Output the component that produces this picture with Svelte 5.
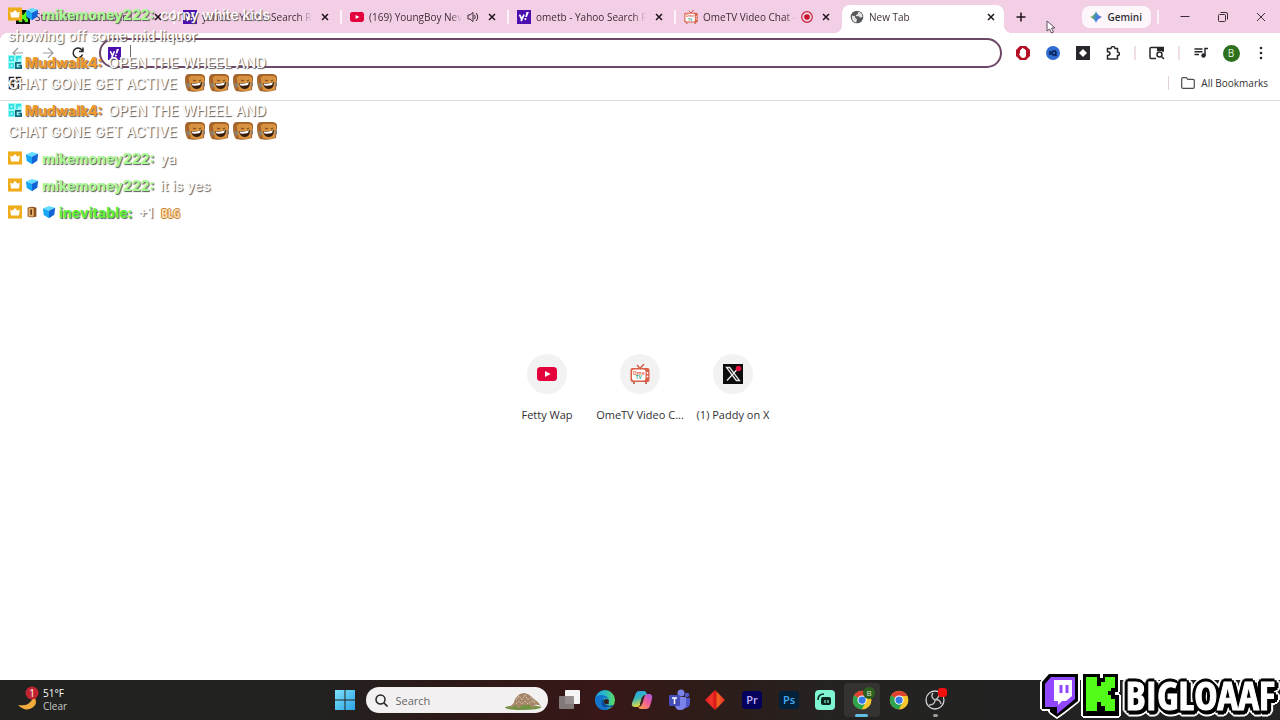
<script lang="ts">
  type Tab = { title: string; icon: string; media?: string; active?: boolean };

  const tabs: Tab[] = [
    { title: "Streamer Dashboard", icon: "kick" },
    { title: "yahoo - Yahoo Search R", icon: "yahoo" },
    { title: "(169) YoungBoy Nev", icon: "youtube", media: "audio" },
    { title: "ometb - Yahoo Search R", icon: "yahoo" },
    { title: "OmeTV Video Chat -", icon: "ome", media: "record" },
    { title: "New Tab", icon: "globe", active: true },
  ];

  const shortcuts = [
    { label: "Fetty Wap", icon: "youtube" },
    { label: "OmeTV Video C...", icon: "ome" },
    { label: "(1) Paddy on X", icon: "x" },
  ];

  const wheel = "OPEN THE WHEEL AND CHAT GONE GET ACTIVE";
  const messages = [
    { user: "mikemoney222", tone: "lime", badges: ["crown", "cube"], text: "corny white kids showing off some mid liquor", emotes: [] },
    { user: "Mudwalk4", tone: "orange", badges: ["og"], text: wheel, emotes: ["toast", "toast", "toast", "toast"] },
    { user: "Mudwalk4", tone: "orange", badges: ["og"], text: wheel, emotes: ["toast", "toast", "toast", "toast"] },
    { user: "mikemoney222", tone: "lime", badges: ["crown", "cube"], text: "ya", emotes: [] },
    { user: "mikemoney222", tone: "lime", badges: ["crown", "cube"], text: "it is yes", emotes: [] },
    { user: "inevitable", tone: "green", badges: ["crown", "bread", "cube"], text: "+1", emotes: ["blg"] },
  ];

  const apps = [
    { id: "taskview", label: "Task view" },
    { id: "edge", label: "Microsoft Edge" },
    { id: "copilot", label: "Copilot" },
    { id: "teams", label: "Teams" },
    { id: "diamond", label: "Diamond" },
    { id: "pr", label: "Premiere Pro" },
    { id: "ps", label: "Photoshop" },
    { id: "streamlabs", label: "Streamlabs" },
    { id: "chromeb", label: "Chrome, profile B" },
    { id: "chrome", label: "Chrome" },
    { id: "obs", label: "OBS Studio" },
  ];

  let address = $state("");
  let query = $state("");
</script>

{#snippet siteIcon(name: string, size: number)}
  <svg class="site-icon" width={size} height={size} viewBox="0 0 20 20" aria-hidden="true">
    {#if name === "youtube"}
      <rect y="3" width="20" height="14" rx="3.5" fill="#e4003a" />
      <path d="M8 7l5.5 3L8 13z" fill="#fff" />
    {:else if name === "yahoo"}
      <rect width="20" height="20" fill="#4b0fae" />
      <path d="M3.5 6.5l3 6M10 6.5l-4.2 9.5" stroke="#fff" stroke-width="2.4" fill="none" />
      <path d="M13.5 3H17l-2.800 7h-2.400z" fill="#fff" />
      <circle cx="12" cy="13" r="1.5" fill="#fff" />
    {:else if name === "ome"}
      <path d="M7 1l3 3.5L14 0" stroke="#d4573c" stroke-width="1.4" fill="none" />
      <rect x="0.500" y="4" width="19" height="14" rx="2" fill="#d95f47" />
      <rect x="2" y="5.5" width="13.500" height="11" rx="2" fill="#fff" />
      <path d="M4 18v2M16 18v2" stroke="#b9442e" stroke-width="1.5" />
      <circle cx="17.500" cy="9" r="0.9" fill="#fff" /><circle cx="17.500" cy="12.5" r="0.9" fill="#fff" />
      <text x="8.700" y="10.600" text-anchor="middle" font-size="5" font-weight="700" fill="#e2694f">Ome</text>
      <text x="8.700" y="15.200" text-anchor="middle" font-size="5" font-weight="700" fill="#35a889">TV</text>
    {:else if name === "globe"}
      <circle cx="10" cy="10" r="9" fill="#55585b" />
      <path d="M3 8l4 1 1 3 2 1-1 5c-4 0-7-4-6-10zM9 2l3 1-1 3-3 1 1 2h4l1 2 4-1c0-5-4-8-9-8z" fill="#f4f4f4" opacity="0.9" />
    {:else if name === "x"}
      <rect width="20" height="20" fill="#0c0c0c" />
      <path d="M3.5 3.5h3.200l9.800 13h-3.200zM15.5 4L4 16.5" fill="none" stroke="#e8e8e8" stroke-width="1.3" />
      <circle cx="15.5" cy="4.5" r="2.800" fill="#e3123f" />
    {:else if name === "kick"}
      <rect width="20" height="20" fill="#0a0a0a" />
      <path d="M4 3h5v4h2V5h2V3h4v5h-2v4h2v5h-4v-2h-2v-2H9v4H4z" fill="#53fc18" />
    {/if}
  </svg>
{/snippet}

{#snippet chatIcon(name: string)}
  {#if name === "crown"}
    <svg class="badge" viewBox="0 0 16 16" aria-hidden="true">
      <rect width="16" height="15" y="0.5" fill="#efad1c" />
      <path d="M2.500 5L5 6.500l3-3 3 3L13.500 5l-1 7h-9z" fill="#fff" />
    </svg>
  {:else if name === "cube"}
    <svg class="badge" viewBox="0 0 16 16" aria-hidden="true">
      <path d="M1 4l7-3 7 2-7 3.5z" fill="#5fdcff" />
      <path d="M1 4l7 2.500V15l-6-3.500z" fill="#18a6f5" />
      <path d="M15 3L8 6.500V15l6-4z" fill="#1263d6" />
    </svg>
  {:else if name === "og"}
    <svg class="badge" viewBox="0 0 16 16" aria-hidden="true">
      <rect width="16" height="16" fill="#a5fbf5" />
      <path d="M1 1h6v6H1zM9 1h6v3h-4v3H9zM1 9h6v6H1z" fill="#32dfe2" />
      <path d="M3 3h2v2H3zM3 11h2v2H3z" fill="#d5ffff" />
      <path d="M15 9H9v6h6v-3h-3" fill="none" stroke="#14677d" stroke-width="2" />
    </svg>
  {:else if name === "bread"}
    <svg class="badge" viewBox="0 0 16 16" aria-hidden="true">
      <path d="M3 3q5-2 10 0v10q-5 2-10 0z" fill="#895024" />
      <path d="M4 4q3-2 6 0v9H4z" fill="#e7b06a" />
      <path d="M7 5v6" stroke="#633813" stroke-width="2" />
    </svg>
  {:else if name === "toast"}
    <svg class="emote" viewBox="0 0 20 20" aria-hidden="true">
      <path d="M0 6Q0 1 4 1h12q5 1 4 5l-1 11q-8 3-16 1-3-4-3-12z" fill="#a5652b" />
      <path d="M4 7Q3 3 7 3h9q4 1 3 4l-1 10q-6 2-12 0z" fill="#d8923f" />
      <path d="M8 7l3 1M14 8l2-1" stroke="#7b431a" stroke-width="1.2" />
      <path d="M6 10q5 1 11-1 0 7-5 7-5 0-6-6z" fill="#351b10" />
      <path d="M6.500 10.500q5 .500 9.500-1l-1 2.500q-4 1-7.500.500z" fill="#fff" />
      <path d="M1 10l4 1v4l-3-2zM18 10l2-1v4l-2 1z" fill="#8b8478" />
    </svg>
  {:else}
    <span class="blg">BLG</span>
  {/if}
{/snippet}

{#snippet chrome()}
  <circle cx="12" cy="12" r="11" fill="#f6c62d" />
  <path d="M12 12L2.500 6.500A11 11 0 0 1 21.500 6.500z" fill="#df4132" />
  <path d="M12 12L2.500 6.500A11 11 0 0 0 12 23l4.500-8z" fill="#2da44e" />
  <path d="M12 7h9.800A11 11 0 0 1 12 23l4.500-8.500z" fill="#f6c62d" />
  <circle cx="12" cy="12" r="5.500" fill="#fff" />
  <circle cx="12" cy="12" r="4.300" fill="#3377e8" />
{/snippet}

<div class="desktop">
  <header class="tab-strip">
    <div class="tabs" role="tablist" aria-label="Open tabs">
      {#each tabs as tab}
        <div class="tab" class:active={tab.active}>
          <button class="tab-main" type="button" role="tab" aria-selected={!!tab.active}>
            {@render siteIcon(tab.icon, 14)}
            <span class="tab-title">{tab.title}</span>
            {#if tab.media === "audio"}
              <svg class="media" viewBox="0 0 12 12" aria-label="Playing audio">
                <path d="M1 4h2l3-2.500v9L3 8H1z" fill="none" stroke="#3b2a36" />
                <path d="M7.500 4q1.500 2 0 4M9 2q3.500 4 0 8" fill="none" stroke="#3b2a36" />
              </svg>
            {:else if tab.media === "record"}
              <svg class="media" viewBox="0 0 12 12" aria-label="Recording">
                <circle cx="6" cy="6" r="5.300" fill="none" stroke="#c5273c" stroke-width="1.2" />
                <circle cx="6" cy="6" r="2.800" fill="#c5162e" />
              </svg>
            {/if}
          </button>
          <button class="tab-close" type="button" aria-label="Close {tab.title}">
            <svg width="8" height="8" viewBox="0 0 8 8"><path d="M1 1l6 6M7 1L1 7" stroke="#20151d" stroke-width="1.5" /></svg>
          </button>
        </div>
      {/each}
      <button class="new-tab" type="button" aria-label="New tab">
        <svg width="10" height="10" viewBox="0 0 10 10"><path d="M5 0.500v9M0.500 5h9" stroke="#20151d" stroke-width="1.5" /></svg>
      </button>
    </div>
    <button class="gemini" type="button">
      <svg width="12" height="12" viewBox="0 0 12 12" aria-hidden="true">
        <path d="M6 0q1 4 6 6-5 2-6 6-1-4-6-6 5-2 6-6z" fill="url(#gem)" />
        <defs>
          <linearGradient id="gem" x1="0" y1="0.300" x2="1" y2="0.600">
            <stop offset="0" stop-color="#e5b53b" /><stop offset="0.350" stop-color="#4d9e8f" /><stop offset="0.600" stop-color="#3f80e6" /><stop offset="1" stop-color="#7b5fc4" />
          </linearGradient>
        </defs>
      </svg>
      Gemini
    </button>
    <div class="window-controls">
      <button type="button" aria-label="Minimize"><svg viewBox="0 0 10 10"><path d="M0.500 4.500h9" /></svg></button>
      <button type="button" aria-label="Restore"><svg viewBox="0 0 10 10"><rect x="0.500" y="2.500" width="7" height="7" rx="1" /><path d="M2.500 0.500H8q1.500 0 1.500 1.500v5.500" /></svg></button>
      <button type="button" aria-label="Close"><svg viewBox="0 0 10 10"><path d="M1 1l8 8M9 1L1 9" /></svg></button>
    </div>
  </header>

  <div class="chrome-body">
    <div class="toolbar">
      <button class="tool" type="button" aria-label="Back"><svg class="faint" viewBox="0 0 14 14"><path d="M12 7H2M7 2L2 7l5 5" /></svg></button>
      <button class="tool" type="button" aria-label="Forward"><svg class="faint" viewBox="0 0 14 14"><path d="M2 7h10M7 2l5 5-5 5" /></svg></button>
      <button class="tool" type="button" aria-label="Reload"><svg viewBox="0 0 14 14"><path d="M11.500 8.500A4.800 4.800 0 1 1 10.800 4L12 5.200M12 1.500v4H8" /></svg></button>
      <label class="omnibox">
        {@render siteIcon("yahoo", 13)}
        <span class="caret"></span>
        <input type="text" aria-label="Address and search bar" bind:value={address} />
      </label>
      <button class="tool" type="button" aria-label="AdBlock">
        <svg viewBox="0 0 14 14"><path class="solid" d="M4 0h6l4 4v6l-4 4H4l-4-4V4z" fill="#b40f24" /><path class="solid" d="M4 7V4h1V3h1V2h1.500v1H9v1h1v5q0 3-3 3-2 0-4-4z" fill="#fff" /></svg>
      </button>
      <button class="tool" type="button" aria-label="IQ">
        <svg viewBox="0 0 14 14"><circle class="solid" cx="7" cy="7" r="7" fill="#2f6bd0" /><path d="M4 5v4M9.500 9l1 1" stroke="#0b1c4c" /><circle cx="8" cy="7" r="2" stroke="#0b1c4c" /></svg>
      </button>
      <button class="tool" type="button" aria-label="Diamond">
        <svg viewBox="0 0 14 14"><rect class="solid" width="14" height="14" fill="#27272d" /><path class="solid" d="M7 3l4 4-4 4-4-4z" fill="#fff" /></svg>
      </button>
      <button class="tool" type="button" aria-label="Extensions">
        <svg viewBox="0 0 14 14"><path d="M1.500 2.500H5q.3-2 2-2t2 2h2.500v3.500q2 .3 2 1.800t-2 1.700v3.500h-10V9.500Q4 9.200 4 7.500T1.500 5.800z" /></svg>
      </button>
      <span class="divider"></span>
      <button class="tool" type="button" aria-label="Search tabs">
        <svg class="wide" viewBox="0 0 16 14"><path d="M7 12.500H2q-1 0-1-1v-9q0-1 1-1h12V6" /><path class="solid" d="M8 1h7v4H8z" fill="#26272a" /><circle cx="10.500" cy="8.500" r="2.500" /><path d="M12.500 10.500L15 13" /></svg>
      </button>
      <span class="divider"></span>
      <button class="tool" type="button" aria-label="Media controls">
        <svg viewBox="0 0 14 14"><path d="M0.500 3h8M0.500 5.800h8M0.500 8.500h4.500M11 9.500V2.500h3" /><circle class="solid" cx="9.500" cy="9.500" r="2.200" fill="#26272a" /></svg>
      </button>
      <button class="tool" type="button" aria-label="Profile"><span class="avatar">B</span></button>
      <button class="tool" type="button" aria-label="Menu">
        <svg viewBox="0 0 14 14"><g fill="#26272a"><circle class="solid" cx="7" cy="2" r="1.300" /><circle class="solid" cx="7" cy="7" r="1.300" /><circle class="solid" cx="7" cy="12" r="1.300" /></g></svg>
      </button>
    </div>

    <div class="bookmarks">
      <button class="tool" type="button" aria-label="Apps">
        <svg viewBox="0 0 14 14"><rect x="1.500" y="1.500" width="4" height="4" /><rect x="8.500" y="1.500" width="4" height="4" /><rect x="1.500" y="8.500" width="4" height="4" /><path d="M10.500 8v5M8 10.500h5" /></svg>
      </button>
      <button class="all-bookmarks" type="button">
        <svg width="14" height="12" viewBox="0 0 14 12"><path d="M0.700 10V2q0-1.300 1.300-1.300h3.300L6.800 2.300H12q1.300 0 1.300 1.300V10q0 1.300-1.300 1.300H2Q0.700 11.300 0.700 10z" fill="none" stroke="#4c4d50" stroke-width="1.2" /></svg>
        All Bookmarks
      </button>
    </div>
  </div>

  <main>
    <nav class="shortcuts" aria-label="Shortcuts">
      {#each shortcuts as shortcut}
        <a href="#{shortcut.icon}">
          <span class="bubble">{@render siteIcon(shortcut.icon, 20)}</span>
          <span>{shortcut.label}</span>
        </a>
      {/each}
    </nav>
  </main>

  <footer class="taskbar">
    <button class="weather" type="button">
      <svg width="24" height="28" viewBox="0 0 24 28" aria-hidden="true">
        <path d="M18 12q3 6-3 10-7 4-14-3 11 2 15-7z" fill="#f2ac3c" />
        <circle cx="15" cy="7" r="6.500" fill="#c32530" />
        <text x="15" y="10.500" text-anchor="middle" font-size="10" fill="#fff">1</text>
      </svg>
      <span><b>51°F</b><br />Clear</span>
    </button>

    <div class="dock">
      <button class="start" type="button" aria-label="Start">
        <svg width="20" height="20" viewBox="0 0 20 20"><path d="M0 0h9.500v9.500H0zM10.500 0H20v9.500h-9.500zM0 10.500h9.500V20H0zM10.500 10.500H20V20h-9.500z" fill="url(#win)" /><defs><linearGradient id="win" x2="1" y2="1"><stop stop-color="#7fe0fb" /><stop offset="1" stop-color="#2ba4e6" /></linearGradient></defs></svg>
      </button>
      <label class="search">
        <svg width="13" height="13" viewBox="0 0 13 13" aria-hidden="true"><circle cx="5.500" cy="5.500" r="4.500" fill="none" stroke="#262626" stroke-width="1.5" /><path d="M9 9l3.500 3.500" stroke="#262626" stroke-width="1.6" /></svg>
        <input type="text" placeholder="Search" aria-label="Search" bind:value={query} />
        <svg width="40" height="20" viewBox="0 0 40 20" aria-hidden="true">
          <path d="M1 17q20-5 37 0-3 3-20 3T1 17z" fill="#709343" />
          <path d="M2 18Q10 16 11 9q8-12 19 0 5 3 7 7-4-2-7-1l1 3h-3l-2-3h-8l-2 3h-3v-3q-6 3-11 3z" fill="#a68669" />
          <path d="M12 10l3-4 3 4 3-5 3 5 3-3 4 5M12 14l3-3 3 3 3-3 3 3 4-3 3 2" fill="none" stroke="#d3c3ae" stroke-dasharray="2 1" />
        </svg>
      </label>
      <div class="apps">
        {#each apps as app}
          <button type="button" class="app" class:running={app.id === "chromeb"} class:idle={app.id === "obs"} aria-label={app.label}>
            <svg width="24" height="24" viewBox="0 0 24 24">
              {#if app.id === "taskview"}
                <rect x="8" y="2" width="15" height="14" rx="1" fill="#f4f4f4" /><rect x="2" y="8" width="15" height="13" rx="1" fill="#8b8584" opacity="0.9" />
              {:else if app.id === "edge"}
                <circle cx="12" cy="12" r="10" fill="url(#edge-top)" />
                <path d="M2 12q0-5 7-5 6 1 7 5-1-2-4-2-4 1-3 5 2 5 8 5-2 2-5 2Q3 22 2 12z" fill="#1274cb" />
                <path d="M9 12q-3 9 10 7 1-1 1-2-6 2-9-2-1-2 0-4z" fill="#0d4b98" />
                <path d="M11 15q-1-4 2-4 3 0 3 2-1 2 0 3-3 1-5-1z" fill="#30201f" />
                <defs><linearGradient id="edge-top" x2="1"><stop stop-color="#1b9fe0" /><stop offset="0.500" stop-color="#2bb9c9" /><stop offset="1" stop-color="#5bdc60" /></linearGradient></defs>
              {:else if app.id === "copilot"}
                <path d="M6 5q1-2 3-2h5q2 0 2.500 2l.500 2h-2q-2 0-3 3l-2 7q-1 2-3 2H5q-4 0-3-4z" fill="url(#cop1)" />
                <path d="M18 6h1q4 0 3 5l-2 7q-1 3-4 3h-5q-2 0-3-2 3 0 4-3l2-6q1-4 4-4z" fill="url(#cop2)" />
                <path d="M12 9l-2 7h2l2-7z" fill="#382025" />
                <defs>
                  <linearGradient id="cop1" x2="0.300" y2="1"><stop stop-color="#27a6f2" /><stop offset="0.500" stop-color="#37b5bc" /><stop offset="1" stop-color="#e9dc42" /></linearGradient>
                  <linearGradient id="cop2" x1="1" x2="0.200" y2="1"><stop stop-color="#9b59e8" /><stop offset="0.500" stop-color="#ef5b9a" /><stop offset="1" stop-color="#fa9b4e" /></linearGradient>
                </defs>
              {:else if app.id === "teams"}
                <circle cx="14" cy="5" r="3.500" fill="#7b83eb" /><circle cx="20" cy="7" r="2.300" fill="#5059c9" />
                <path d="M15 10h8v5q0 4-4 5-4-1-4-5z" fill="#5059c9" /><path d="M8 9h11v7q0 6-6 6-5 0-5-6z" fill="#7b83eb" />
                <rect x="2" y="7" width="11" height="11" rx="1" fill="#464eb8" /><path d="M5 10h5M7.500 10v6" stroke="#fff" stroke-width="1.5" />
              {:else if app.id === "diamond"}
                <path d="M12 2l10 10-10 10L2 12z" fill="url(#dia)" />
                <defs><linearGradient id="dia"><stop stop-color="#e81722" /><stop offset="0.350" stop-color="#f2382a" /><stop offset="0.500" stop-color="#d80f18" /><stop offset="0.650" stop-color="#f26a20" /><stop offset="1" stop-color="#e9232c" /></linearGradient></defs>
              {:else if app.id === "pr"}
                <rect x="2" y="3" width="20" height="18" rx="3" fill="#05005c" /><text x="12" y="15.500" text-anchor="middle" font-size="11" font-weight="600" fill="#c4b5ff">Pr</text>
              {:else if app.id === "ps"}
                <rect x="2" y="3" width="20" height="18" rx="3" fill="#052139" /><text x="12" y="15.500" text-anchor="middle" font-size="11" font-weight="600" fill="#44aef5">Ps</text>
              {:else if app.id === "streamlabs"}
                <rect x="2" y="2" width="20" height="20" rx="4" fill="#80f5d2" />
                <rect x="8" y="9" width="10" height="8" rx="2" fill="#0a251f" /><path d="M5 12q0-6 6-6" fill="none" stroke="#0a251f" stroke-width="1.6" /><path d="M12 12v3M15 12v3" stroke="#80f5d2" stroke-width="1.2" />
              {:else if app.id === "chrome" || app.id === "chromeb"}
                <g transform="translate(2 2) scale(0.840)">{@render chrome()}</g>
                {#if app.id === "chromeb"}
                  <circle cx="19" cy="5" r="6" fill="#2c611f" /><text x="19" y="8" text-anchor="middle" font-size="8" fill="#d8e8d0">B</text>
                {/if}
              {:else}
                <circle cx="12" cy="12" r="9" fill="#202020" stroke="#d2d2d2" stroke-width="1.3" />
                <path d="M10 5q-3 4 2 7 5-1 6 4M12 12q0 5-6 5M12 12q4-2 4-6" fill="none" stroke="#bdbdbd" stroke-width="1.4" />
                <rect x="15" y="0" width="9" height="9" rx="3" fill="#ef1010" />
              {/if}
            </svg>
          </button>
        {/each}
      </div>
    </div>
  </footer>

  <section class="chat" aria-label="Stream chat">
    {#each messages as message}
      <p>
        {#each message.badges as badge}{@render chatIcon(badge)}{/each}<strong class={message.tone}>{message.user}:</strong>
        {message.text}
        {#each message.emotes as emote}{@render chatIcon(emote)}{/each}
      </p>
    {/each}
  </section>

  <div class="brand">
    <svg width="38" height="44" viewBox="0 0 38 44" aria-hidden="true">
      <path d="M8 1h29v27L23 39l-7 5-7-5v-3H1V9z" fill="#000" />
      <path d="M10 4h24v22L22 36l-6 5v-7H4V11z" fill="#9146ff" />
      <path d="M13 7h18v16l-6 5h-4l-4 4v-4h-4z" fill="#fff" />
      <path d="M20 12v8M26 12v8" stroke="#9146ff" stroke-width="3" />
    </svg>
    <svg width="38" height="44" viewBox="0 0 38 44" aria-hidden="true">
      <path d="M1 1h17v4h3V1h15v18h-3v3h4v21H1z" fill="#000" />
      <path d="M4 4h11v9h4V9h4V4h10v11h-4v3h-3v4h3v4h4v12H23v-5h-4v-4h-4v9H4z" fill="#53fc18" />
    </svg>
    <span class="brand-name">BIGLOAAF</span>
  </div>

  <svg class="cursor" width="10" height="14" viewBox="0 0 10 14" aria-hidden="true">
    <path d="M1 1v10l2.500-2 2 4 2-1-2-4h3.500z" fill="#fff" stroke="#5d4d59" />
  </svg>
</div>

<style>
  :global(body) {
    margin: 0;
    background: #fff;
  }

  .desktop {
    position: relative;
    display: flex;
    flex-direction: column;
    min-height: 100vh;
    font-family: "Open Sans", "Noto Sans", sans-serif;
    font-size: 10px;
    color: #303033;
    overflow: hidden;
  }

  button,
  input {
    font: inherit;
    color: inherit;
    border: 0;
    padding: 0;
    background: none;
  }

  button {
    display: flex;
    align-items: center;
    justify-content: center;
  }

  svg {
    flex: none;
  }

  /* Tab strip */
  .tab-strip {
    display: flex;
    align-items: center;
    height: 33px;
    background: #f3cfe5;
  }

  .tabs {
    display: flex;
    flex: 1;
    min-width: 0;
    height: 100%;
    padding-left: 7px;
  }

  .tab {
    position: relative;
    display: flex;
    align-items: center;
    flex: 0 1 167px;
    min-width: 0;
    box-sizing: border-box;
    padding: 0 11px 0 9px;
    color: #3e2c38;
  }

  .tab + .tab:not(.active)::after {
    content: "";
    position: absolute;
    left: -1px;
    width: 2px;
    height: 14px;
    background: #fdf2f9;
  }

  .tab.active {
    flex-basis: 162px;
    padding: 0 8px 5px;
    margin-top: 5px;
    border-radius: 8px 8px 0 0;
    background: #fff;
  }

  .tab.active::before,
  .tab.active::after {
    content: "";
    position: absolute;
    bottom: 0;
    width: 8px;
    height: 8px;
  }

  .tab.active::before {
    left: -8px;
    background: radial-gradient(circle at 0 0, #f3cfe5 8px, #fff 8px);
  }

  .tab.active::after {
    right: -8px;
    background: radial-gradient(circle at 100% 0, #f3cfe5 8px, #fff 8px);
  }

  .tab-main {
    flex: 1;
    gap: 5px;
    min-width: 0;
    text-align: left;
  }

  .tab-title {
    flex: 1;
    overflow: hidden;
    white-space: nowrap;
    mask-image: linear-gradient(90deg, #000 88%, transparent);
  }

  .media {
    width: 12px;
    height: 12px;
  }

  .tab-close {
    width: 10px;
    height: 16px;
    margin-left: 8px;
  }

  .new-tab {
    width: 34px;
  }

  .gemini {
    gap: 6px;
    height: 22px;
    padding: 0 9px 0 8px;
    border-radius: 8px;
    background: #fdf6fb;
    font-weight: 600;
  }

  .window-controls {
    display: flex;
    margin-left: 6px;
    border-left: 2px solid #fdf2f9;
  }

  .window-controls button {
    width: 38px;
    height: 14px;
  }

  .window-controls button:first-child {
    margin-left: 7px;
  }

  .window-controls svg {
    width: 10px;
    height: 10px;
    fill: none;
    stroke: #3c2d38;
  }

  /* Toolbar */
  .chrome-body {
    border-bottom: 1px solid #dcdcdf;
    background: radial-gradient(circle at 8px 8px, #fff 8px, #f3cfe5 8px) 0 0 / 8px 8px no-repeat, #fff;
  }

  .toolbar {
    display: flex;
    align-items: center;
    padding: 5px 4px 0 3px;
  }

  .tool {
    width: 30px;
    height: 30px;
  }

  .tool svg {
    width: 14px;
    height: 14px;
    fill: none;
    stroke: #26272a;
    stroke-width: 1.5;
  }

  .tool svg.wide {
    width: 16px;
  }

  .tool svg.faint {
    stroke: #9b9b9e;
    stroke-width: 1.2;
  }

  .tool svg .solid {
    stroke: none;
  }

  .omnibox {
    display: flex;
    align-items: center;
    flex: 1;
    box-sizing: border-box;
    height: 30px;
    margin: 0 6px;
    padding: 0 7px;
    border: 2px solid #6d4766;
    border-radius: 15px;
  }

  .omnibox input {
    flex: 1;
    min-width: 0;
    outline: none;
  }

  .caret {
    width: 1px;
    height: 16px;
    margin-left: 9px;
    background: #6b6b6b;
  }

  .divider {
    width: 2px;
    height: 14px;
    margin: 0 6px;
    background: #eedfe8;
  }

  .avatar {
    width: 17px;
    border-radius: 50%;
    background: #2f701e;
    color: #e2f1dc;
    line-height: 17px;
  }

  .bookmarks {
    display: flex;
    align-items: center;
    justify-content: space-between;
    height: 30px;
    padding: 0 12px 2px 0;
  }

  .all-bookmarks {
    gap: 6px;
    height: 14px;
    padding-left: 12px;
    border-left: 1px solid #e3d0dc;
  }

  /* New tab page */
  main {
    display: flex;
    flex: 1;
    align-items: center;
    justify-content: center;
  }

  .shortcuts {
    display: flex;
    padding-bottom: 4px;
  }

  .shortcuts a {
    display: flex;
    flex-direction: column;
    align-items: center;
    gap: 13px;
    width: 93px;
    color: #303033;
    font-size: 11px;
    line-height: 16px;
    text-decoration: none;
    white-space: nowrap;
  }

  .bubble {
    display: grid;
    place-items: center;
    width: 40px;
    height: 40px;
    border-radius: 50%;
    background: #f2f2f3;
  }

  /* Taskbar */
  .taskbar {
    display: grid;
    grid-template-columns: 1fr auto 1fr;
    align-items: center;
    height: 40px;
    background: linear-gradient(90deg, #222220 0 25%, #2c1917 35%, #381718 47%, #2c1d19 56%, #242322 66%, #222 100%);
    color: #f2f2f2;
  }

  .weather {
    justify-self: start;
    gap: 2px;
    margin-left: 17px;
    line-height: 13px;
    text-align: left;
    color: #c8c8c8;
  }

  .weather b {
    color: #fff;
    font-weight: 500;
  }

  .dock {
    display: flex;
    align-items: center;
    gap: 3px;
  }

  .start {
    width: 36px;
    height: 36px;
  }

  .search {
    display: flex;
    align-items: center;
    box-sizing: border-box;
    width: 182px;
    height: 26px;
    padding: 0 4px 0 9px;
    border-radius: 13px;
    background: #f2f0f0;
  }

  .search input {
    flex: 1;
    min-width: 0;
    margin-left: 8px;
    font-size: 11px;
    color: #333;
  }

  .search input::placeholder {
    color: #666;
    opacity: 1;
  }

  .apps {
    display: grid;
    grid-template-columns: repeat(11, 1fr);
    width: 403px;
  }

  .app {
    position: relative;
    height: 34px;
    border-radius: 4px;
  }

  .app svg {
    overflow: visible;
  }

  .app.running {
    background: #343332;
  }

  .app.running::after,
  .app.idle::after {
    content: "";
    position: absolute;
    bottom: 0;
    width: 13px;
    height: 3px;
    border-radius: 2px;
    background: #62bfe4;
  }

  .app.idle::after {
    width: 5px;
    background: #9b9b9b;
  }

  /* Chat overlay */
  .chat {
    position: absolute;
    top: 4px;
    left: 8px;
    display: flex;
    flex-direction: column;
    gap: 6px;
    width: 280px;
    font-family: Inter, sans-serif;
    font-size: 14px;
    font-weight: 500;
    line-height: 21px;
    color: #fff;
    text-shadow: 1px 1px 1px #5c5c5c;
    pointer-events: none;
  }

  .chat p {
    margin: 0;
  }

  .chat strong {
    margin-right: 2px;
    font-weight: 800;
  }

  .lime {
    color: #a8f796;
  }

  .orange {
    color: #ee9a2c;
  }

  .green {
    color: #5ff03a;
  }

  .badge {
    width: 14px;
    height: 14px;
    margin-right: 3px;
    vertical-align: -1px;
  }

  .emote {
    width: 20px;
    height: 20px;
    margin-left: 4px;
    vertical-align: -4px;
  }

  .blg {
    margin-left: 4px;
    color: #fbe0b4;
    font-family: "Open Sans Condensed", "Roboto Condensed", Roboto, sans-serif;
    font-size: 13px;
    font-weight: 700;
    text-shadow: 1px 0 #c98238, -1px 0 #c98238, 0 1px #c98238, 0 -1px #c98238;
  }

  /* Streamer brand */
  .brand {
    position: absolute;
    right: 5px;
    bottom: 3px;
    display: flex;
    align-items: center;
    gap: 3px;
    filter: drop-shadow(1px 1px 0 #fff) drop-shadow(-1px -1px 0 #fff) drop-shadow(1px -1px 0 #fff) drop-shadow(-1px 1px 0 #fff);
  }

  .brand-name {
    margin-left: 3px;
    color: #fff;
    font-family: "Open Sans Condensed", "Roboto Condensed", Roboto, sans-serif;
    font-size: 39px;
    font-weight: 700;
    line-height: 44px;
    -webkit-text-stroke: 1px #fff;
    filter: drop-shadow(2px 2px 0 #000) drop-shadow(-2px -2px 0 #000) drop-shadow(2px -1px 0 #000) drop-shadow(-1px 2px 0 #000);
  }

  .cursor {
    position: absolute;
    top: 20px;
    left: 1046px;
  }
</style>
